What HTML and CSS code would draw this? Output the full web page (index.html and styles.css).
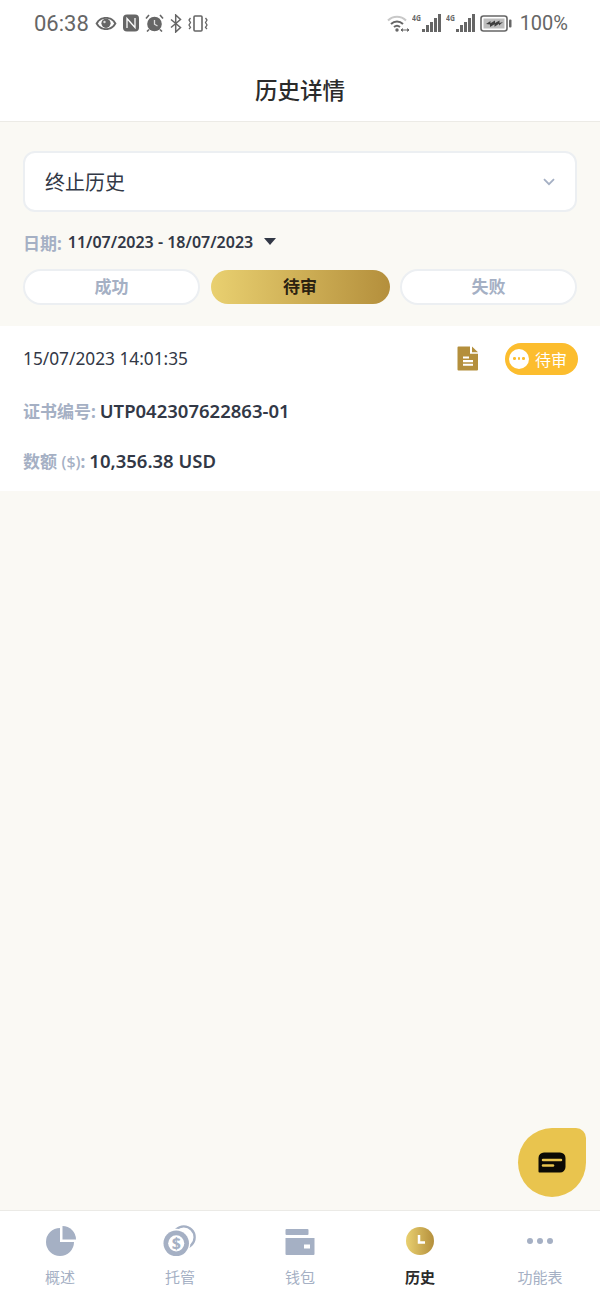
FILE: index.html
```html
<!DOCTYPE html>
<html lang="zh">

<head>
    <meta charset="UTF-8">
    <meta name="viewport" content="width=device-width, initial-scale=1.0">
    <title>历史详情</title>
    <link rel="stylesheet" href="styles.css">
</head>

<body>
    <div class="status-bar">
        <div class="status-left">
            <span class="status-time">06:38</span>
            <svg width="22" height="15" viewBox="0 0 22 15"><path d="M0.500 7.500C3 3 6.600 1 11 1s8 2 10.500 6.500C19 12 15.400 14 11 14S3 12 0.500 7.500z" fill="#666"/><path d="M2.800 7.500C5 4.200 7.500 2.800 11 2.800s6 1.400 8.200 4.700C17 10.800 14.500 12.200 11 12.200S5 10.800 2.800 7.500z" fill="#fff"/><circle cx="11" cy="7.300" r="4.600" fill="#666"/><circle cx="9.500" cy="6" r="1.200" fill="#ddd"/></svg>
            <svg width="16" height="18" viewBox="0 0 16 18"><rect x="0" y="0.500" width="16" height="17" rx="4" fill="#666"/><path d="M4 14V4.500l8 9V4" stroke="#fff" stroke-width="1.300" fill="none"/></svg>
            <svg width="19" height="18" viewBox="0 0 19 18"><circle cx="9.500" cy="10" r="7.300" fill="#666"/><path d="M9.500 6v4.200l3 1.800" stroke="#ddd" stroke-width="1.300" fill="none"/><path d="M1 4.500l3-3.500M18 4.500L15 1M4 15.500l-2 2M15 15.500l2 2" stroke="#666" stroke-width="1.600"/></svg>
            <svg width="12" height="19" viewBox="0 0 12 19"><path d="M1 5.500l9.500 8-4.800 4.500V1l4.800 4.500L1 13.500" stroke="#666" stroke-width="1.500" fill="none"/></svg>
            <svg width="20" height="17" viewBox="0 0 20 17"><rect x="6" y="1" width="8" height="15" rx="1" stroke="#666" stroke-width="1.600" fill="none"/><path d="M2.500 3L1 5l1.500 2.500L1 10l1.500 2.500L1 14M17.500 3L19 5l-1.500 2.500L19 10l-1.500 2.500L19 14" stroke="#666" stroke-width="1.300" fill="none"/></svg>
        </div>
        <div class="status-right">
            <svg class="wifi" width="22" height="18" viewBox="0 0 22 18"><path d="M1 6.500C6 1.500 14 1.500 19 6.500" stroke="#c8c8c8" stroke-width="2" fill="none"/><path d="M4 10c3.500-3.300 8.500-3.300 12 0" stroke="#666" stroke-width="2" fill="none"/><path d="M7 13c2-1.700 4-1.700 6 0" stroke="#666" stroke-width="2" fill="none"/><circle cx="10" cy="16" r="1.700" fill="#666"/><path d="M14 16h8M15.500 14.500L14 16l1.500 1.500M20.500 14.500L22 16l-1.500 1.500" stroke="#666" stroke-width="1"/></svg>
            <div class="signal">
                <span class="signal-label">4G</span>
                <span class="signal-bars"><i class="b1"></i><i class="b2"></i><i class="b3"></i><i class="b4"></i><i class="b5"></i></span>
            </div>
            <div class="signal">
                <span class="signal-label">4G</span>
                <span class="signal-bars"><i class="b1"></i><i class="b2"></i><i class="b3"></i><i class="b4"></i><i class="b5"></i></span>
            </div>
            <svg width="32" height="17" viewBox="0 0 32 17"><rect x="1" y="1" width="26" height="15" rx="2.500" stroke="#666" stroke-width="1.600" fill="none"/><rect x="3.500" y="3.500" width="21" height="10" fill="#bdbdbd"/><path d="M6 9l4.500-3v2.300L15 5.500v2.500l4.500-2.500V8L23 7l-4 3.500V8.700l-4.500 3V9.200L10 12V9.600z" fill="#3f3f3f"/><rect x="29" y="4.500" width="2.500" height="8" rx="1" fill="#666"/></svg>
            <span class="status-battery">100%</span>
        </div>
    </div>

    <header class="page-header">
        <h1>历史详情</h1>
    </header>

    <main class="content">
        <div class="filters">
            <div class="select-box">
                <span>终止历史</span>
                <svg width="12" height="8" viewBox="0 0 12 8"><path d="M1 1.200l5 5 5-5" stroke="#a5b0c4" stroke-width="1.800" fill="none"/></svg>
            </div>
            <div class="date-row">
                <span class="label">日期:</span>
                <span class="date-value">11/07/2023 - 18/07/2023</span>
                <span class="caret"></span>
            </div>
            <div class="tabs">
                <div class="tab">成功</div>
                <div class="tab active">待审</div>
                <div class="tab">失败</div>
            </div>
        </div>

        <div class="record">
            <div class="record-top">
                <span class="record-date">15/07/2023 14:01:35</span>
                <svg class="doc-icon" width="22" height="25" viewBox="0 0 22 24" preserveAspectRatio="none"><path d="M1.500 0.500H13v7h8v15a1 1 0 0 1-1 1H1.500a1 1 0 0 1-1-1v-21a1 1 0 0 1 1-1z" fill="#b48f3c"/><path d="M15 0.500l6 5.500h-6z" fill="#b48f3c"/><path d="M6 11h6M6 14.500h10M6 18h10" stroke="#fff" stroke-width="2"/></svg>
                <div class="badge">
                    <span class="badge-dot"><i></i><i></i><i></i></span>
                    <span>待审</span>
                </div>
            </div>
            <div class="record-line"><span class="label">证书编号:</span> <b>UTP042307622863-01</b></div>
            <div class="record-line"><span class="label">数额 <small>($)</small>:</span> <b>10,356.38 USD</b></div>
        </div>

        <div class="chat-fab">
            <svg width="28" height="22" viewBox="0 0 28 22"><path d="M6 0.500h16a5.500 5.500 0 0 1 5.500 5.500v9a5.500 5.500 0 0 1-5.500 5.500H1.500a1 1 0 0 1-1-1V6A5.500 5.500 0 0 1 6 0.500z" fill="#0c0a05"/><path d="M5 8h18" stroke="#e9c44e" stroke-width="2.500" stroke-linecap="round"/><path d="M5 13.500h10" stroke="#e9c44e" stroke-width="2.500" stroke-linecap="round"/></svg>
        </div>
    </main>

    <nav class="tabbar">
        <div class="tabbar-item">
            <svg width="32" height="32" viewBox="0 0 32 32"><path d="M16 3V17H30A14 14 0 1 1 16 3z" fill="#a5b0c4"/><path d="M18.500 1A13.500 13.500 0 0 1 32 14.500H18.500z" fill="#a5b0c4"/></svg>
            <span>概述</span>
        </div>
        <div class="tabbar-item">
            <svg width="36" height="36" viewBox="0 0 36 36"><circle cx="22" cy="14" r="11.500" stroke="#a5b0c4" stroke-width="2.500" fill="none"/><circle cx="14" cy="20" r="15" fill="#fff"/><circle cx="14" cy="20.500" r="13.500" fill="#a5b0c4"/><circle cx="14" cy="20.500" r="8.500" fill="#fff"/><text class="coin-sign" x="14" y="26.500" text-anchor="middle">$</text></svg>
            <span>托管</span>
        </div>
        <div class="tabbar-item">
            <svg width="32" height="32" viewBox="0 0 32 32"><rect x="1.500" y="4" width="23" height="6" rx="1" fill="#a5b0c4"/><path d="M1.500 13h29v16a1 1 0 0 1-1 1h-27a1 1 0 0 1-1-1z" fill="#a5b0c4"/><rect x="20" y="19.500" width="6" height="4" fill="#fff"/></svg>
            <span>钱包</span>
        </div>
        <div class="tabbar-item current">
            <svg width="30" height="30" viewBox="0 0 30 30"><defs><linearGradient id="clockGold" x1="0" y1="0" x2="1" y2="0"><stop offset="0" stop-color="#e9d070"/><stop offset="1" stop-color="#b48f3c"/></linearGradient></defs><circle cx="15" cy="15" r="14" fill="url(#clockGold)"/><path d="M14 9v7.500h6" stroke="#fff" stroke-width="2.500" fill="none"/></svg>
            <span>历史</span>
        </div>
        <div class="tabbar-item">
            <svg width="32" height="32" viewBox="0 0 32 32"><circle cx="6" cy="16" r="3" fill="#a5b0c4"/><circle cx="16" cy="16" r="3" fill="#a5b0c4"/><circle cx="26" cy="16" r="3" fill="#a5b0c4"/></svg>
            <span>功能表</span>
        </div>
    </nav>
</body>

</html>
```
FILE: styles.css
```css
* {
    margin: 0;
    padding: 0;
    box-sizing: border-box;
}
html, body {
    height: 100%;
}
body {
    display: flex;
    flex-direction: column;
    height: 1300px;
    overflow: hidden;
    font-family: "Noto Sans", "Noto Sans CJK SC", sans-serif;
    background-color: #faf9f4;
    color: #323846;
}
.status-bar {
    height: 46px;
    background: #fff;
    padding: 0 32px 0 34px;
    display: flex;
    justify-content: space-between;
    align-items: center;
    color: #666;
}
.status-left {
    display: flex;
    align-items: center;
    gap: 6px;
}
.status-right {
    display: flex;
    align-items: center;
    gap: 5px;
}
.status-time {
    font-family: Roboto, sans-serif;
    font-size: 22px;
}
.status-battery {
    font-family: Roboto, sans-serif;
    font-size: 20px;
    margin-left: 3px;
}
.wifi {
    margin-right: -2px;
}
.signal {
    width: 29px;
    height: 20px;
    position: relative;
}
.signal-label {
    position: absolute;
    top: 0;
    left: 0;
    font-size: 8px;
    font-weight: 700;
    line-height: 9px;
    transform: scaleX(0.85);
    transform-origin: left;
}
.signal-bars {
    position: absolute;
    right: 0;
    bottom: 1px;
    display: flex;
    align-items: flex-end;
    gap: 1.500px;
}
.signal-bars i {
    display: block;
    width: 2.500px;
    background: #666;
}
.b1 { height: 3px; }
.b2 { height: 7px; }
.b3 { height: 10px; }
.b4 { height: 14px; }
.b5 { height: 18px; }

.page-header {
    height: 76px;
    background: #fff;
    border-bottom: 1px solid #ecebe6;
    display: flex;
    justify-content: center;
    align-items: center;
}
.page-header h1 {
    font-size: 22.500px;
    font-weight: 500;
    color: #2b2b2b;
    margin-top: 12px;
}

.content {
    flex: 1;
    position: relative;
}
.filters {
    padding: 29px 23px 21px;
}
.select-box {
    height: 61px;
    background: #fff;
    border: 2px solid #eceff2;
    border-radius: 12px;
    padding: 0 20px;
    display: flex;
    justify-content: space-between;
    align-items: center;
    font-size: 20px;
    color: #323846;
}
.label {
    color: #a5b0c4;
    font-weight: 700;
    font-size: 17px;
}
.label small {
    font-size: 16px;
    font-weight: 500;
}
.date-row {
    margin-top: 18px;
    height: 24px;
    display: flex;
    align-items: center;
}
.date-value {
    font-weight: 600;
    font-size: 16px;
    margin-left: 6px;
}
.caret {
    width: 0;
    height: 0;
    margin-left: 11px;
    margin-bottom: 2px;
    border-left: 6px solid transparent;
    border-right: 6px solid transparent;
    border-top: 7px solid #323846;
}
.tabs {
    margin-top: 15px;
    display: grid;
    grid-template-columns: repeat(3, 177px);
    justify-content: space-between;
}
.tab {
    height: 36px;
    border: 2px solid #eceff2;
    border-radius: 18px;
    background: #fff;
    display: flex;
    justify-content: center;
    align-items: center;
    font-size: 17px;
    font-weight: 700;
    color: #a5b0c4;
    padding-bottom: 3px;
}
.tab.active {
    border: none;
    height: 34px;
    margin: 1px -1px 0;
    background: linear-gradient(90deg, #e9d070, #b48f3c);
    color: #2b2110;
}

.record {
    background: #fff;
    padding: 16px 22px 0 23px;
    height: 165px;
}
.record-top {
    display: flex;
    align-items: center;
    height: 33px;
}
.record-date {
    font-size: 17.300px;
    flex: 1;
}
.doc-icon {
    margin-right: 26px;
}
.badge {
    width: 73px;
    height: 32px;
    border-radius: 16px;
    background: #fcbd2e;
    color: #fff;
    font-size: 16px;
    display: flex;
    align-items: center;
    gap: 6px;
    padding-left: 4px;
}
.badge-dot {
    width: 20px;
    height: 20px;
    border-radius: 50%;
    background: #fff;
    display: flex;
    justify-content: center;
    align-items: center;
    gap: 2px;
}
.badge-dot i {
    width: 2.500px;
    height: 2.500px;
    border-radius: 50%;
    background: #fcbd2e;
}
.record-line {
    margin-top: 20px;
    height: 30px;
    display: flex;
    align-items: center;
    gap: 4px;
}
.record-line b {
    font-size: 18.500px;
    font-weight: 600;
}

.chat-fab {
    position: absolute;
    right: 14px;
    bottom: 13px;
    width: 68px;
    height: 69px;
    background: #e9c44e;
    border-radius: 50%;
    border-top-right-radius: 10px;
    display: flex;
    justify-content: center;
    align-items: center;
}

.tabbar {
    height: 90px;
    background: #fff;
    border-top: 1px solid #ebeae6;
    display: grid;
    grid-template-columns: repeat(5, 1fr);
}
.tabbar-item {
    display: flex;
    flex-direction: column;
    align-items: center;
    padding-top: 13px;
    font-size: 15px;
    color: #a5b0c4;
}
.tabbar-item svg {
    height: 34px;
}
.tabbar-item span {
    margin-top: 9px;
    line-height: 20px;
}
.tabbar-item.current {
    color: #2b2b2b;
    font-weight: 700;
}
.coin-sign {
    font-size: 17px;
    font-weight: 700;
    fill: #a5b0c4;
}
```
